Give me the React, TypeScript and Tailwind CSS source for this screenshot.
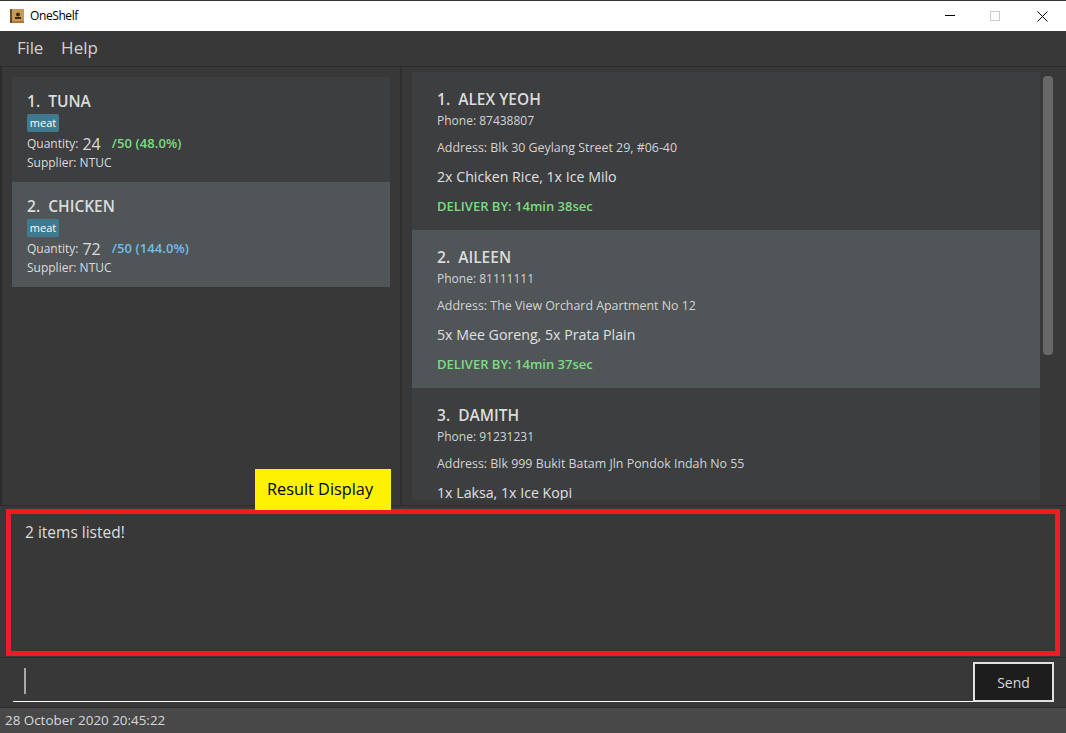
const font = { fontFamily: '"Open Sans", "Noto Sans", sans-serif' };

const items = [
  { name: "TUNA", qty: 24, target: "/50 (48.0%)", color: "text-[#7ddc82]", bg: "bg-[#3c3e3f]" },
  { name: "CHICKEN", qty: 72, target: "/50 (144.0%)", color: "text-[#73bde8]", bg: "bg-[#505658]" },
];

// third card is scrolled past the bottom of the panel, its deliver line never shows
const orders = [
  { name: "ALEX YEOH", phone: "87438807", address: "Blk 30 Geylang Street 29, #06-40", food: "2x Chicken Rice, 1x Ice Milo", time: "14min 38sec", bg: "bg-[#3c3e3f]" },
  { name: "AILEEN", phone: "81111111", address: "The View Orchard Apartment No 12", food: "5x Mee Goreng, 5x Prata Plain", time: "14min 37sec", bg: "bg-[#505658]" },
  { name: "DAMITH", phone: "91231231", address: "Blk 999 Bukit Batam Jln Pondok Indah No 55", food: "1x Laksa, 1x Ice Kopi", time: "", bg: "bg-[#3c3e3f]" },
];

function AppIcon() {
  return (
    <svg width="14" height="14" viewBox="0 0 14 14" className="mr-[6px]">
      <rect width="14" height="14" fill="#c99a55" />
      <rect width="2" height="14" fill="#6b4a25" />
      <rect x="2" y="12" width="12" height="2" fill="#a97a3c" />
      <circle cx="8" cy="5.5" r="2" fill="#3a2a18" />
      <rect x="5" y="8" width="6" height="2" fill="#3a2a18" />
    </svg>
  );
}

function TitleBar() {
  return (
    <div className="h-[31px] shrink-0 bg-white flex items-center pl-[10px] border-t border-t-[#333] text-[12px] text-black">
      <AppIcon />
      <span className="tracking-[-0.4px]">OneShelf</span>
      <div className="ml-auto flex items-center">
        <svg width="10" height="2" className="mr-[35px]"><rect width="10" height="1" fill="#000" /></svg>
        <svg width="10" height="10" className="mr-[37px]"><rect x="0.5" y="0.5" width="9" height="9" fill="none" stroke="#cccccc" /></svg>
        <svg width="11" height="11" className="mr-[18px]"><path d="M0.5 0.5L10.5 10.5M10.5 0.5L0.5 10.5" stroke="#000" /></svg>
      </div>
    </div>
  );
}

function MenuBar() {
  return (
    <div className="h-[36px] shrink-0 bg-[#383838] border-b border-b-[#2b2b2b] flex items-center pl-[17px] gap-[18px] text-[17px] text-[#d2d2d2] pb-[2px]">
      <span className="tracking-[-0.2px]">File</span>
      <span>Help</span>
    </div>
  );
}

function ItemCard({ item, index }: { item: (typeof items)[number]; index: number }) {
  return (
    <div className={`h-[105px] pl-[15px] pt-[14px] ${item.bg}`}>
      <div className="h-[21px] leading-[21px] text-[15.5px] font-semibold text-[#dcdcdc] whitespace-pre">
        {index + 1}.  {item.name}
      </div>
      <div className="mt-[2px] w-[32px] h-[18px] rounded-[2px] bg-[#3e7b91] text-white text-[11px] leading-[17px] text-center">
        meat
      </div>
      <div className="mt-[1px] h-[22px] flex items-center text-[12px] text-[#dcdcdc]">
        <span>Quantity:</span>
        <span className="ml-[4px] text-[16px]">{item.qty}</span>
        <span className={`ml-[11px] text-[13px] font-semibold tracking-[0.1px] ${item.color}`}>{item.target}</span>
      </div>
      <div className="h-[15px] leading-[15px] text-[12px] text-[#dcdcdc]">Supplier: NTUC</div>
    </div>
  );
}

function OrderCard({ order, index }: { order: (typeof orders)[number]; index: number }) {
  return (
    <div className={`h-[158px] shrink-0 pl-[25px] pt-[17px] ${order.bg}`}>
      <div className="h-[22px] leading-[21px] text-[15.5px] font-semibold text-[#dcdcdc] whitespace-pre">
        {index + 1}.  {order.name}
      </div>
      <div className="h-[20px] leading-[20px] text-[12px] text-[#d4d4d4]">Phone: {order.phone}</div>
      <div className="mt-[7px] h-[20px] leading-[20px] text-[12.4px] text-[#d4d4d4]">Address: {order.address}</div>
      <div className="mt-[8px] h-[22px] leading-[22px] text-[14.2px] text-[#e0e0e0]">{order.food}</div>
      {order.time && (
        <div className="mt-[8px] h-[20px] leading-[20px] text-[13px] font-semibold text-[#7ddc82]">DELIVER BY: {order.time}</div>
      )}
    </div>
  );
}

export default function App() {
  return (
    <div className="w-[1066px] h-[733px] flex flex-col overflow-hidden bg-[#383838]" style={font}>
      <TitleBar />
      <MenuBar />

      <div className="h-[438px] shrink-0 flex border-l-2 border-l-[#2b2b2b]">
        <div className="w-[398px] shrink-0 px-[10px] pt-[10px]">
          {items.map((item, i) => (
            <ItemCard key={item.name} item={item} index={i} />
          ))}
        </div>
        <div className="w-[2px] shrink-0 bg-[#2f2f2f]" />
        <div className="flex-1 min-w-0 flex pl-[10px] pt-[5px]">
          <div className="w-[628px] h-[428px] overflow-hidden flex flex-col">
            {orders.map((order, i) => (
              <OrderCard key={order.name} order={order} index={i} />
            ))}
          </div>
          <div className="ml-[3px] mt-[4px] w-[10px] h-[279px] rounded-[4px] bg-[#686868]" />
        </div>
      </div>

      <div className="h-[152px] shrink-0 relative px-[6px] pt-[3px] pb-[1px] border-t border-t-[#2b2b2b]">
        <div className="h-full border-[5px] border-[#ed1c24] bg-[#383838] pl-[14px] pt-[7px] text-[15.5px] text-[#dcdcdc]">
          2 items listed!
        </div>
        <div className="absolute left-[255px] top-[-37px] w-[136px] h-[41px] bg-[#fff200] text-black text-[16.3px] flex items-center pl-[12px]">
          Result Display
        </div>
      </div>

      <div className="h-[51px] shrink-0 flex items-end pl-[13px] pr-[12px] pb-[5px] border-t border-t-[#2b2b2b] border-b border-b-[#2b2b2b]">
        <div className="flex-1 h-[39px] border-b-[1px] border-b-white pl-[11px] pt-[5px]">
          <div className="w-[2px] h-[26px] bg-[#a8a8a8]" />
        </div>
        <div className="w-[81px] h-[40px] border-2 border-[#e0e0e0] bg-[#1d1d1d] text-[#d8d8d8] text-[14px] flex items-center justify-center">
          Send
        </div>
      </div>

      <div className="flex-1 bg-[#484848] pl-[5px] flex items-center text-[13.4px] text-[#d8d8d8]">
        28 October 2020 20:45:22
      </div>
    </div>
  );
}
